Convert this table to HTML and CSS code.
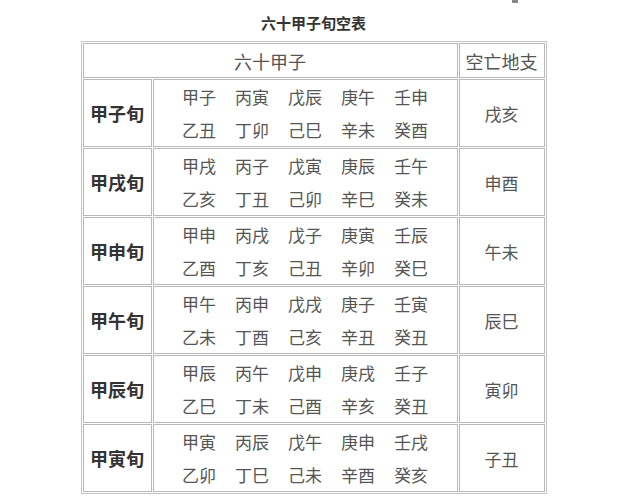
FILE: index.html
```html
<!DOCTYPE html>
<html lang="zh">
<head>
<meta charset="utf-8">
<title>六十甲子旬空表</title>
<link rel="stylesheet" href="styles.css">
</head>
<body>
<div class="mark"></div>
<h1 class="title">六十甲子旬空表</h1>
<table class="xun">
  <colgroup>
    <col class="c-label">
    <col class="c-pairs">
    <col class="c-kong">
  </colgroup>
  <tr class="head">
    <td colspan="2">六十甲子</td>
    <td>空亡地支</td>
  </tr>
  <tr>
    <th>甲子旬</th>
    <td class="pairs"><div class="grid"><span>甲子</span><span>丙寅</span><span>戊辰</span><span>庚午</span><span>壬申</span><span>乙丑</span><span>丁卯</span><span>己巳</span><span>辛未</span><span>癸酉</span></div></td>
    <td class="kong">戌亥</td>
  </tr>
  <tr>
    <th>甲戌旬</th>
    <td class="pairs"><div class="grid"><span>甲戌</span><span>丙子</span><span>戊寅</span><span>庚辰</span><span>壬午</span><span>乙亥</span><span>丁丑</span><span>己卯</span><span>辛巳</span><span>癸未</span></div></td>
    <td class="kong">申酉</td>
  </tr>
  <tr>
    <th>甲申旬</th>
    <td class="pairs"><div class="grid"><span>甲申</span><span>丙戌</span><span>戊子</span><span>庚寅</span><span>壬辰</span><span>乙酉</span><span>丁亥</span><span>己丑</span><span>辛卯</span><span>癸巳</span></div></td>
    <td class="kong">午未</td>
  </tr>
  <tr>
    <th>甲午旬</th>
    <td class="pairs"><div class="grid"><span>甲午</span><span>丙申</span><span>戊戌</span><span>庚子</span><span>壬寅</span><span>乙未</span><span>丁酉</span><span>己亥</span><span>辛丑</span><span>癸丑</span></div></td>
    <td class="kong">辰巳</td>
  </tr>
  <tr>
    <th>甲辰旬</th>
    <td class="pairs"><div class="grid"><span>甲辰</span><span>丙午</span><span>戊申</span><span>庚戌</span><span>壬子</span><span>乙巳</span><span>丁未</span><span>己酉</span><span>辛亥</span><span>癸丑</span></div></td>
    <td class="kong">寅卯</td>
  </tr>
  <tr>
    <th>甲寅旬</th>
    <td class="pairs"><div class="grid"><span>甲寅</span><span>丙辰</span><span>戊午</span><span>庚申</span><span>壬戌</span><span>乙卯</span><span>丁巳</span><span>己未</span><span>辛酉</span><span>癸亥</span></div></td>
    <td class="kong">子丑</td>
  </tr>
</table>
</body>
</html>
```

FILE: styles.css
```css
html, body {
  margin: 0;
  padding: 0;
  background: #ffffff;
}
body {
  font-family: "Noto Sans CJK SC", "Noto Sans", sans-serif;
  color: #555;
}
.mark {
  width: 6px;
  height: 3px;
  margin-left: 512px;
  background: #888;
}
.title {
  margin: 11px 0 9px 0;
  font-size: 15px;
  line-height: 18px;
  font-weight: bold;
  color: #333;
  text-align: center;
}
.xun {
  margin: 0 auto;
  border: 1px solid #c4c4c4;
  border-collapse: separate;
  border-spacing: 1px;
  table-layout: fixed;
  width: 466px;
}
.c-label { width: 69px; }
.c-pairs { width: 305px; }
.c-kong { width: 86px; }
.xun td, .xun th {
  border: 1px solid #b8b8b8;
  padding: 0;
  text-align: center;
  vertical-align: middle;
}
.head td {
  height: 33px;
  font-size: 18px;
  line-height: 20px;
  color: #555;
}
.xun th {
  height: 66px;
  font-size: 18px;
  font-weight: bold;
  color: #333;
}
.kong {
  font-size: 17px;
}
.grid {
  display: grid;
  grid-template-columns: repeat(5, 35px);
  column-gap: 18px;
  justify-content: center;
  font-size: 17px;
  line-height: 33px;
  white-space: nowrap;
}
```
